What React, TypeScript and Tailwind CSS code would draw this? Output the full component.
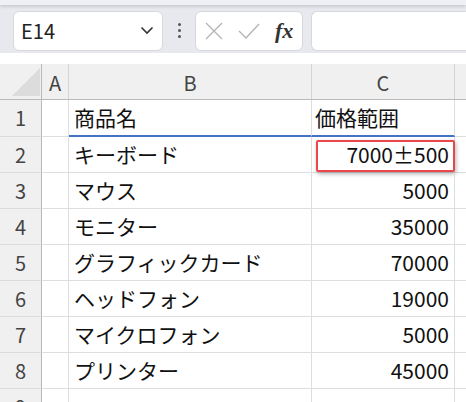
import React from 'react';

const FONT = { fontFamily: '"Noto Sans CJK JP", "Noto Sans", sans-serif' };

const ROWS: { no: number; name: string; price: string }[] = [
  { no: 1, name: '商品名', price: '価格範囲' },
  { no: 2, name: 'キーボード', price: '7000±500' },
  { no: 3, name: 'マウス', price: '5000' },
  { no: 4, name: 'モニター', price: '35000' },
  { no: 5, name: 'グラフィックカード', price: '70000' },
  { no: 6, name: 'ヘッドフォン', price: '19000' },
  { no: 7, name: 'マイクロフォン', price: '5000' },
  { no: 8, name: 'プリンター', price: '45000' },
  { no: 9, name: '', price: '' },
];

const GRID = 'grid grid-cols-[42px_27px_243px_143px_1fr]';

const FormulaBar: React.FC = () => (
  <div className="bg-[#e7e9ef]">
    <div className="h-[5px] bg-[#eef0f4] shadow-[0_2px_3px_rgba(0,0,0,0.12)]" />
    <div className="flex items-center h-[48px] pt-[3px] pl-[13px]">
      {/* Name box */}
      <div className="w-[150px] h-[40px] bg-white border border-[#d6d8dd] rounded-[6px] flex items-center justify-between pl-[7px] pr-[8px]">
        <span className="text-[20px] text-[#222] leading-none" style={FONT}>E14</span>
        <svg width="14" height="9" viewBox="0 0 14 9" fill="none">
          <path d="M1.5 1.5 L7 7 L12.5 1.5" stroke="#333" strokeWidth="1.6" />
        </svg>
      </div>
      {/* dots */}
      <div className="w-[32px] flex flex-col items-center gap-[3px]">
        <span className="w-[3px] h-[3px] rounded-full bg-[#555]" />
        <span className="w-[3px] h-[3px] rounded-full bg-[#555]" />
        <span className="w-[3px] h-[3px] rounded-full bg-[#555]" />
      </div>
      {/* cancel / enter / fx */}
      <div className="w-[108px] h-[40px] bg-white border border-[#d6d8dd] rounded-[6px] flex items-center pl-[9px]">
        <svg width="18" height="18" viewBox="0 0 18 18" fill="none">
          <path d="M1 1 L17 17 M17 1 L1 17" stroke="#b3b3b3" strokeWidth="1.3" />
        </svg>
        <svg width="22" height="16" viewBox="0 0 22 16" fill="none" className="ml-[15px]">
          <path d="M1 8 L8 15 L21 1" stroke="#b3b3b3" strokeWidth="1.3" />
        </svg>
        <span
          className="ml-[15px] text-[22px] italic font-bold text-[#333] leading-none"
          style={{ fontFamily: '"Liberation Serif", serif' }}
        >
          fx
        </span>
      </div>
      {/* formula input */}
      <div className="ml-[8px] flex-1 h-[40px] bg-white border border-r-0 border-[#d6d8dd] rounded-l-[6px]" />
    </div>
  </div>
);

const HeaderRow: React.FC = () => (
  <div className={`${GRID} h-[36px] mt-[11px] bg-[#f0f0f0] border-b border-[#b9b9b9] text-[20px] text-[#444]`} style={FONT}>
    <div className="relative border-r border-[#b9b9b9]">
      <svg width="30" height="30" viewBox="0 0 30 30" className="absolute left-[11px] bottom-[2px]">
        <path d="M29 1 L29 29 L1 29 Z" fill="#dcdcdc" />
      </svg>
    </div>
    <div className="flex items-center justify-center pt-[2px] border-r border-[#d4d4d4]">A</div>
    <div className="flex items-center justify-center pt-[2px] border-r border-[#d4d4d4]">B</div>
    <div className="flex items-center justify-center pt-[2px] border-r border-[#d4d4d4]">C</div>
    <div />
  </div>
);

export default function App() {
  return (
    <div className="w-[466px] h-[402px] overflow-hidden bg-white" style={FONT}>
      <FormulaBar />
      <HeaderRow />
      {ROWS.map((r) => {
        const first = r.no === 1;
        const cellB = first ? 'border-b-2 border-b-[#4472c4]' : 'border-b border-b-[#dedede]';
        return (
          <div key={r.no} className={`${GRID} ${first ? 'h-[37px]' : 'h-[36px]'} text-[21px] text-[#111]`}>
            <div className="flex items-center justify-center bg-[#f0f0f0] border-r border-[#b9b9b9] border-b border-b-[#dcdcdc] text-[20px] text-[#444]">
              {r.no}
            </div>
            <div className="border-r border-[#dedede] border-b border-b-[#dedede]" />
            <div className={`flex items-center pl-[5px] border-r border-[#dedede] ${cellB}`}>{r.name}</div>
            <div
              className={`relative flex items-center pr-[5px] border-r border-[#dedede] ${cellB} ${
                first ? 'justify-start pl-[3px]' : 'justify-end'
              }`}
            >
              {r.no === 2 ? (
                <>
                  <span>{r.price}</span>
                  <div className="absolute left-[4px] top-[3px] right-[-1px] bottom-[0px] border-2 border-[#e8474b] rounded-[2px] shadow-[1px_2px_4px_rgba(0,0,0,0.3)]" />
                </>
              ) : (
                r.price
              )}
            </div>
            <div className="border-b border-b-[#dedede]" />
          </div>
        );
      })}
    </div>
  );
}
